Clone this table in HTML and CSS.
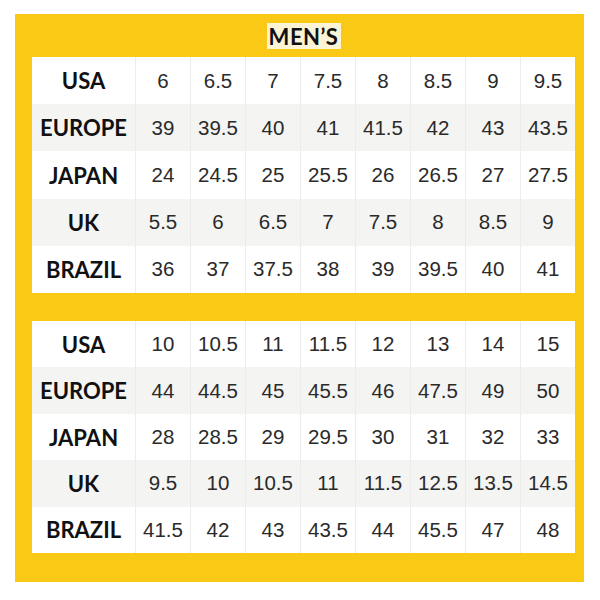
FILE: index.html
```html
<!DOCTYPE html>
<html>
<head>
<meta charset="utf-8">
<link rel="stylesheet" href="styles.css">
</head>
<body>
<div class="chart">
  <div class="title-row"><span class="title">MEN’S</span></div>
  <div class="table t1">
    <div class="row"><div class="label">USA</div><div>6</div><div>6.5</div><div>7</div><div>7.5</div><div>8</div><div>8.5</div><div>9</div><div>9.5</div></div>
    <div class="row alt"><div class="label">EUROPE</div><div>39</div><div>39.5</div><div>40</div><div>41</div><div>41.5</div><div>42</div><div>43</div><div>43.5</div></div>
    <div class="row"><div class="label">JAPAN</div><div>24</div><div>24.5</div><div>25</div><div>25.5</div><div>26</div><div>26.5</div><div>27</div><div>27.5</div></div>
    <div class="row alt"><div class="label">UK</div><div>5.5</div><div>6</div><div>6.5</div><div>7</div><div>7.5</div><div>8</div><div>8.5</div><div>9</div></div>
    <div class="row"><div class="label">BRAZIL</div><div>36</div><div>37</div><div>37.5</div><div>38</div><div>39</div><div>39.5</div><div>40</div><div>41</div></div>
  </div>
  <div class="table t2">
    <div class="row"><div class="label">USA</div><div>10</div><div>10.5</div><div>11</div><div>11.5</div><div>12</div><div>13</div><div>14</div><div>15</div></div>
    <div class="row alt"><div class="label">EUROPE</div><div>44</div><div>44.5</div><div>45</div><div>45.5</div><div>46</div><div>47.5</div><div>49</div><div>50</div></div>
    <div class="row"><div class="label">JAPAN</div><div>28</div><div>28.5</div><div>29</div><div>29.5</div><div>30</div><div>31</div><div>32</div><div>33</div></div>
    <div class="row alt"><div class="label">UK</div><div>9.5</div><div>10</div><div>10.5</div><div>11</div><div>11.5</div><div>12.5</div><div>13.5</div><div>14.5</div></div>
    <div class="row"><div class="label">BRAZIL</div><div>41.5</div><div>42</div><div>43</div><div>43.5</div><div>44</div><div>45.5</div><div>47</div><div>48</div></div>
  </div>
</div>
</body>
</html>
```
FILE: styles.css
```css
html, body {
  margin: 0;
  padding: 0;
  background: #ffffff;
}
body {
  width: 600px;
  height: 600px;
  overflow: hidden;
}
.chart {
  margin: 14px 0 0 15px;
  width: 569px;
  height: 568px;
  box-sizing: border-box;
  background: #fac915;
  padding: 0 9px 29px 17px;
  display: flex;
  flex-direction: column;
}
.title-row {
  height: 43px;
  display: flex;
  justify-content: center;
  align-items: flex-start;
  padding-top: 9px;
  box-sizing: border-box;
}
.title {
  background: #fbf3d6;
  width: 74px;
  height: 26px;
  box-sizing: border-box;
  text-align: center;
  font-family: "Lato", "Open Sans", sans-serif;
  font-weight: 700;
  font-size: 22px;
  line-height: 27px;
  color: #111;
  letter-spacing: 0.5px;
}
.table {
  background: #fff;
  display: flex;
  flex-direction: column;
}
.t1 { height: 236px; }
.t2 { height: 232px; margin-top: 28px; }
.row {
  flex: 1;
  display: grid;
  grid-template-columns: 103px repeat(8, 1fr);
  background: #ffffff;
}
.row.alt { background: #f4f4f3; }
.row > div {
  display: flex;
  align-items: center;
  justify-content: center;
  border-left: 1px solid #ececec;
  font-family: "Liberation Sans", Arial, sans-serif;
  font-size: 20.5px;
  color: #2a2a2a;
}
.row > div.label {
  border-left: none;
  font-family: "Lato", "Open Sans", sans-serif;
  font-weight: 700;
  font-size: 22px;
  color: #111;
}
```
